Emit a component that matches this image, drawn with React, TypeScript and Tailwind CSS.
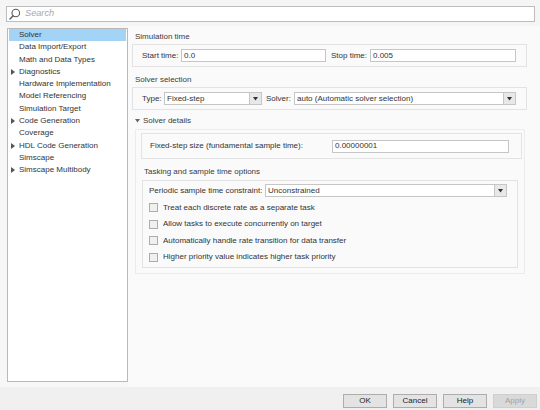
import type { ReactNode } from 'react';

// Дерево категорий слева
const TREE: { label: string; arrow?: boolean }[] = [
  { label: 'Solver' },
  { label: 'Data Import/Export' },
  { label: 'Math and Data Types' },
  { label: 'Diagnostics', arrow: true },
  { label: 'Hardware Implementation' },
  { label: 'Model Referencing' },
  { label: 'Simulation Target' },
  { label: 'Code Generation', arrow: true },
  { label: 'Coverage' },
  { label: 'HDL Code Generation', arrow: true },
  { label: 'Simscape' },
  { label: 'Simscape Multibody', arrow: true },
];

const CHECKS = [
  'Treat each discrete rate as a separate task',
  'Allow tasks to execute concurrently on target',
  'Automatically handle rate transition for data transfer',
  'Higher priority value indicates higher task priority',
];

function RightArrow() {
  return (
    <svg width="4" height="6" viewBox="0 0 4 6" className="shrink-0">
      <path d="M0 0 L4 3 L0 6 Z" fill="#555" />
    </svg>
  );
}

function DownArrow({ fill = '#333' }: { fill?: string }) {
  return (
    <svg width="5" height="4" viewBox="0 0 5 4" className="shrink-0">
      <path d="M0 0 L5 0 L2.5 3.5 Z" fill={fill} />
    </svg>
  );
}

function TextBox({ value, className }: { value: string; className: string }) {
  return (
    <div className={`h-[13px] border border-[#c6c6c6] bg-white flex items-center pl-[2px] ${className}`}>
      {value}
    </div>
  );
}

function Select({ value, className }: { value: string; className: string }) {
  return (
    <div className={`h-[13px] border border-[#c6c6c6] bg-white flex items-center ${className}`}>
      <span className="flex-1 pl-[2px] truncate">{value}</span>
      <span className="w-[12px] h-full border-l border-[#c6c6c6] bg-[#e8e8e8] flex items-center justify-center">
        <DownArrow />
      </span>
    </div>
  );
}

function Title({ children, className = '' }: { children: ReactNode; className?: string }) {
  return <div className={`h-[12px] flex items-center pl-[3px] text-[#3a3a3a] ${className}`}>{children}</div>;
}

function Button({ label, disabled }: { label: string; disabled?: boolean }) {
  return (
    <div
      className={`w-[44px] h-[14px] border flex items-center justify-center ${
        disabled ? 'border-[#cfcfcf] bg-[#d9d9d9] text-[#a3a3a3]' : 'border-[#adadad] bg-[#e3e3e3] text-[#222]'
      }`}
    >
      {label}
    </div>
  );
}

export default function App() {
  return (
    <div className="w-[540px] h-[410px] overflow-hidden flex flex-col bg-[#f0f0f0] font-['Liberation_Sans',Arial,sans-serif] text-[8px] text-[#333]">
      {/* Поиск */}
      <div className="h-[26px] pt-[6px] pl-[6px] pr-[5px] bg-[#f5f5f5]">
        <div className="h-[16px] border border-[#bdbdbd] bg-white flex items-center gap-[4px] pl-[2px]">
          <svg width="12" height="12" viewBox="0 0 12 12" className="shrink-0">
            <circle cx="6.8" cy="5" r="3.8" fill="none" stroke="#5a5a5a" strokeWidth="1.1" />
            <path d="M4.2 7.8 L1 11" stroke="#5a5a5a" strokeWidth="1.4" strokeLinecap="round" />
          </svg>
          <span className="italic text-[9.2px] text-[#a8a8a8]">Search</span>
        </div>
      </div>

      <div className="h-[361px] flex bg-[#fafafa]">
        {/* Дерево */}
        <div className="pl-[7px] pt-[2px] pb-[5px] bg-[#f7f7f7]">
          <div className="w-[121px] h-full border border-[#b9b9b9] bg-white flex flex-col">
            {TREE.map((item, i) => (
              <div
                key={item.label}
                className={`h-[12.27px] flex items-center shrink-0 mx-[1px] ${i === 0 ? 'bg-[#a3d4f6]' : ''}`}
              >
                <span className="w-[10px] pl-[2px] flex items-center">{item.arrow && <RightArrow />}</span>
                <span className="whitespace-nowrap">{item.label}</span>
              </div>
            ))}
          </div>
        </div>

        {/* Настройки */}
        <div className="flex-1 pl-[4px] pr-[13px] flex flex-col">
          <Title className="mt-[5px]">Simulation time</Title>
          <div className="mt-[1px] h-[23px] border border-[#e3e3e3] flex items-center pl-[9px]">
            <span className="w-[39px] whitespace-nowrap">Start time:</span>
            <TextBox value="0.0" className="w-[145px]" />
            <span className="ml-[5px] w-[39px] whitespace-nowrap">Stop time:</span>
            <TextBox value="0.005" className="w-[146px]" />
          </div>

          <Title className="mt-[7px]">Solver selection</Title>
          <div className="mt-[1px] h-[23px] border border-[#e3e3e3] flex items-center pl-[9px]">
            <span className="w-[22px]">Type:</span>
            <Select value="Fixed-step" className="w-[98px]" />
            <span className="ml-[4px] w-[28px]">Solver:</span>
            <Select value="auto (Automatic solver selection)" className="w-[222px]" />
          </div>

          <div className="mt-[5px] h-[12px] flex items-center gap-[3px] pl-[3px] text-[#3a3a3a]">
            <DownArrow fill="#666" />
            <span>Solver details</span>
          </div>
          <div className="mt-[2px] ml-[3px] mr-[2px] h-[145px] border border-[#ececec] pl-[5px] pr-[2px] pt-[3px] flex flex-col">
            <div className="h-[26px] border border-[#e3e3e3] flex items-center pl-[8px]">
              <span className="w-[182px] whitespace-nowrap">Fixed-step size (fundamental sample time):</span>
              <TextBox value="0.00000001" className="w-[177px]" />
            </div>
            <Title className="mt-[7px] pl-[1px]">Tasking and sample time options</Title>
            <div className="mt-[2px] ml-[1px] mr-[4px] h-[88px] border border-[#e3e3e3] flex flex-col pl-[6px] pt-[3px]">
              <div className="h-[13px] flex items-center">
                <span className="w-[116px] whitespace-nowrap">Periodic sample time constraint:</span>
                <Select value="Unconstrained" className="w-[242px]" />
              </div>
              <div className="mt-[6px] flex flex-col gap-[7.6px]">
                {CHECKS.map((c) => (
                  <div key={c} className="h-[9px] flex items-center gap-[5px]">
                    <span className="w-[9px] h-[9px] border border-[#acacac] bg-[#f0f0f0] shrink-0" />
                    <span className="whitespace-nowrap">{c}</span>
                  </div>
                ))}
              </div>
            </div>
          </div>
        </div>
      </div>

      {/* Кнопки */}
      <div className="flex-1 flex justify-end items-start gap-[6px] pt-[7px] pr-[3px]">
        <Button label="OK" />
        <Button label="Cancel" />
        <Button label="Help" />
        <Button label="Apply" disabled />
      </div>
    </div>
  );
}
